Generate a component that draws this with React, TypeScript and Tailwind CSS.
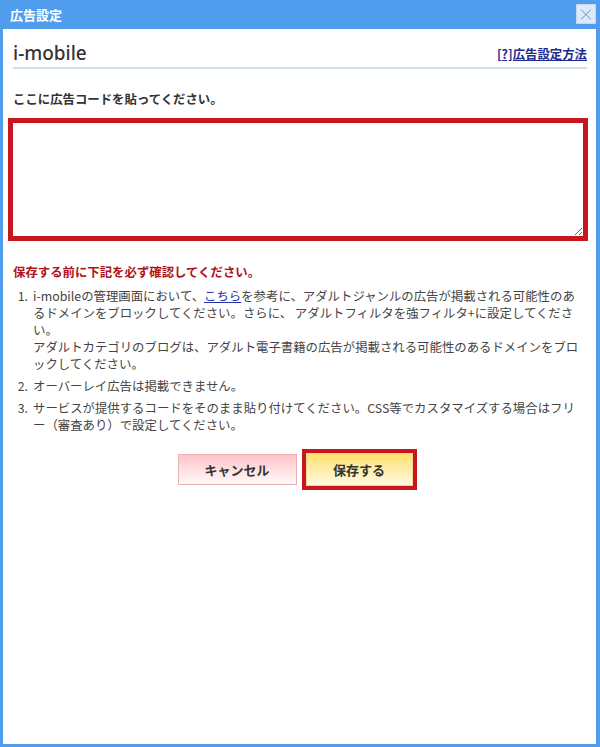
import { X } from "lucide-react";

const jp = "font-['Meiryo','Noto_Sans_CJK_JP',sans-serif]";

const App = () => {
  return (
    <div
      className={`w-[600px] h-[747px] bg-[#519ded] flex flex-col pl-[3px] pr-[4px] pb-[3px] ${jp}`}
    >
      {/* title bar */}
      <div className="h-[29px] flex justify-between pl-[7px]">
        <span className="text-white font-bold text-[13px] leading-[29px]">広告設定</span>
        <button className="mt-[4px] w-[20px] h-[20px] bg-[#dbe9f9] border border-[#c3d8f1] flex items-center justify-center">
          <X className="w-[19px] h-[19px] text-[#6a8db5]" strokeWidth={1.3} />
        </button>
      </div>

      {/* body */}
      <div className="flex-1 bg-white pl-[5px] pr-[8px] pt-[12px] text-[#333]">
        <div className="ml-[5px] mr-[1px] flex items-center justify-between border-b-2 border-[#cfdcea] pb-[2px]">
          <h1 className="font-['Noto_Sans',sans-serif] font-medium text-[19px] leading-[24px] text-[#333]">
            i-mobile
          </h1>
          <a href="#" className="text-[12.4px] font-bold text-[#1d2b8f] underline leading-[17px] mt-[2px]">
            [?]広告設定方法
          </a>
        </div>

        <p className="ml-[5px] mt-[22px] text-[12.4px] leading-[17px] font-bold text-[#333]">
          ここに広告コードを貼ってください。
        </p>

        <textarea className="block mt-[10px] w-full h-[123px] border-[5px] border-[#c8161e] outline-none resize-y p-1 text-[12px]" />

        <p className="ml-[5px] mt-[23px] text-[12.4px] leading-[17px] font-bold text-[#b0121a]">
          保存する前に下記を必ず確認してください。
        </p>

        <ol className="ml-[5px] mt-[7px] flex flex-col gap-[5px] text-[12.4px] leading-[17px] text-[#444] whitespace-nowrap">
          <li className="flex">
            <span className="w-[20px] text-right pr-[5px] shrink-0">1.</span>
            <span>
              i-mobileの管理画面において、
              <a href="#" className="text-[#2233aa] underline">
                こちら
              </a>
              を参考に、アダルトジャンルの広告が掲載される可能性のあ
              <br />
              るドメインをブロックしてください。さらに、 アダルトフィルタを強フィルタ+に設定してくださ
              <br />
              い。
              <br />
              アダルトカテゴリのブログは、アダルト電子書籍の広告が掲載される可能性のあるドメインをブロ
              <br />
              ックしてください。
            </span>
          </li>
          <li className="flex">
            <span className="w-[20px] text-right pr-[5px] shrink-0">2.</span>
            <span>オーバーレイ広告は掲載できません。</span>
          </li>
          <li className="flex">
            <span className="w-[20px] text-right pr-[5px] shrink-0">3.</span>
            <span>
              サービスが提供するコードをそのまま貼り付けてください。CSS等でカスタマイズする場合はフリ
              <br />
              ー（審査あり）で設定してください。
            </span>
          </li>
        </ol>

        <div className="mt-[15px] flex items-center justify-center gap-[5px] pr-[2px]">
          <button className="w-[119px] h-[31px] border border-[#e6b3b7] bg-linear-to-b from-[#ffc3c8] to-[#fffafa] text-[13px] font-bold text-[#333]">
            キャンセル
          </button>
          <button className="w-[115px] h-[41px] border-[4px] border-[#c8161e] bg-linear-to-b from-[#ffdf66] to-[#fffbe3] text-[13px] font-bold text-[#333] shadow-[inset_0_0_0_1px_#f3d98a]">
            保存する
          </button>
        </div>
      </div>
    </div>
  );
};

export default App;
